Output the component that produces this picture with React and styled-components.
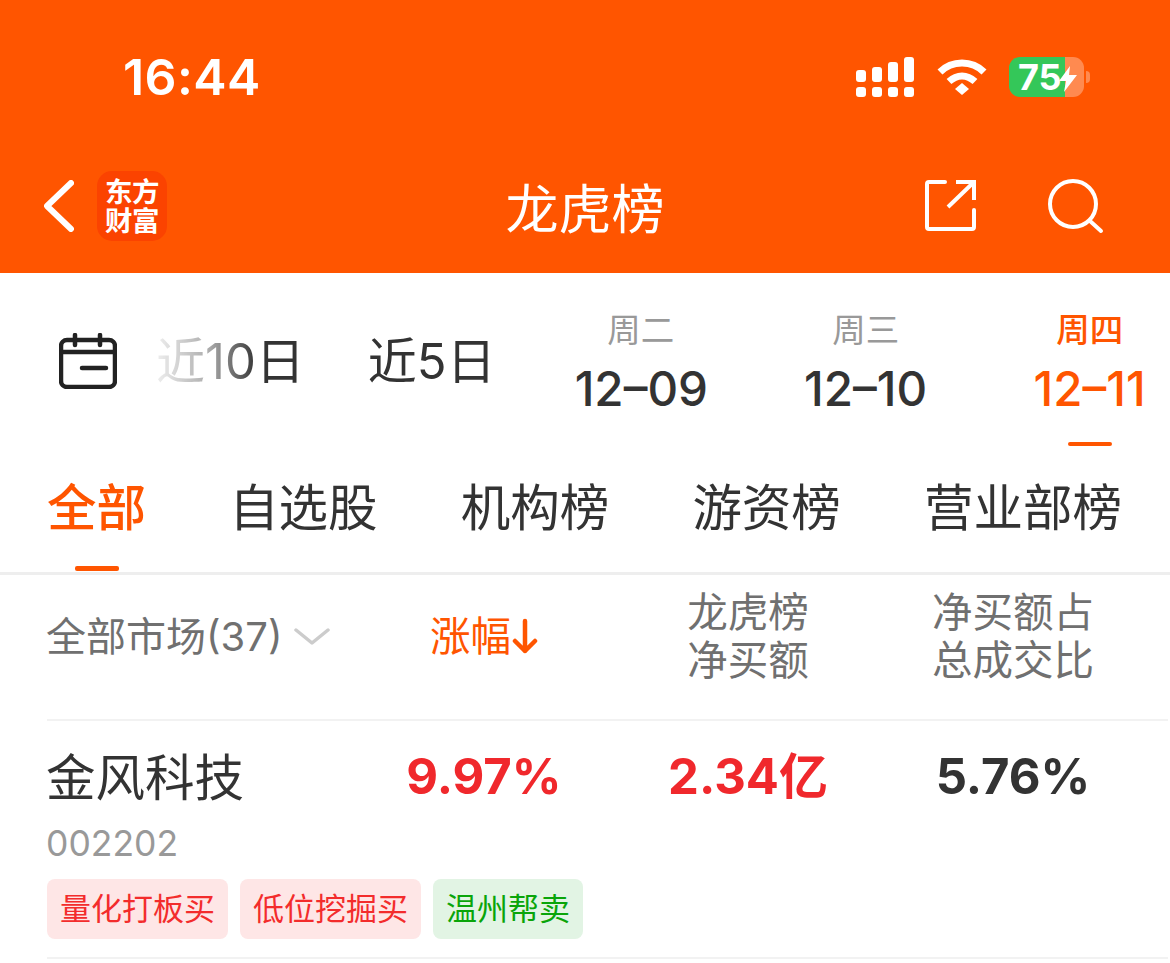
import React from "react";
import styled, { createGlobalStyle } from "styled-components";

const ORANGE = "#ff5500";
const RED = "#f0282c";
const CJK = `Inter, "Noto Sans CJK SC", sans-serif`;

const GlobalStyle = createGlobalStyle`
  html, body {
    margin: 0;
    padding: 0;
    background: #fff;
    font-family: ${CJK};
  }
  * { box-sizing: border-box; }
`;

const Page = styled.div`
  width: 1170px;
  height: 963px;
  overflow: hidden;
  background: #fff;
`;

const Header = styled.header`
  height: 273px;
  background: ${ORANGE};
  color: #fff;
`;

const StatusBar = styled.div`
  height: 154px;
  padding: 0 86px 0 123px;
  display: flex;
  align-items: center;
  justify-content: space-between;
`;

const Time = styled.div`
  font-size: 50px;
  font-weight: 600;
  letter-spacing: 0.4px;
`;

const StatusIcons = styled.div`
  display: flex;
  align-items: center;
  gap: 22.5px;
`;

const Battery = styled.div`
  position: relative;
  width: 75px;
  height: 40px;
  border-radius: 11px;
  padding-left: 9px;
  background: linear-gradient(90deg, #34c759 0 74.5%, #ff8a50 74.5% 100%);
  font-size: 36px;
  font-weight: 700;
  line-height: 40px;
  &::after {
    content: "";
    position: absolute;
    right: -6px;
    top: 14px;
    width: 4px;
    height: 12px;
    border-radius: 0 4px 4px 0;
    background: #ff8a50;
  }
`;

const Bolt = styled.svg`
  position: absolute;
  left: 50px;
  top: 9px;
`;

const Nav = styled.nav`
  height: 119px;
  padding: 0 44px 15px 44px;
  display: grid;
  grid-template-columns: 1fr auto 1fr;
  align-items: center;
`;

const NavLeft = styled.div`
  display: flex;
  align-items: center;
  gap: 23px;
`;

const NavRight = styled.div`
  display: flex;
  align-items: center;
  justify-content: flex-end;
  gap: 69px;
  padding-right: 22px;
`;

const Logo = styled.div`
  width: 70px;
  height: 70px;
  border-radius: 15px;
  background: #fb4300;
  color: #fff;
  font-size: 27.5px;
  font-weight: 700;
  line-height: 29px;
  text-align: center;
  padding-top: 7px;
  letter-spacing: -0.5px;
`;

const NavTitle = styled.h1`
  margin: 0;
  font-size: 53px;
  font-weight: 400;
`;

const DateStrip = styled.div`
  height: 177px;
  padding-left: 59px;
  display: flex;
  align-items: center;
`;

const CalendarIcon = styled.svg`
  flex: none;
  margin-top: -2px;
`;

const Range = styled.div`
  flex: none;
  margin-left: ${(p) => p.$left}px;
  margin-top: -8px;
  font-size: 49px;
  color: #333;
  ${(p) =>
    p.$faded &&
    `-webkit-mask-image: linear-gradient(90deg, rgba(0,0,0,.08) 0, rgba(0,0,0,.4) 35%, #000 68%);
     mask-image: linear-gradient(90deg, rgba(0,0,0,.08) 0, rgba(0,0,0,.4) 35%, #000 68%);`}
`;

const DateCell = styled.div`
  position: relative;
  flex: none;
  width: 132px;
  height: 177px;
  margin-left: ${(p) => p.$left}px;
  padding-top: 36px;
  text-align: center;
  color: ${(p) => (p.$active ? ORANGE : "#333")};
  &::after {
    content: "";
    display: ${(p) => (p.$active ? "block" : "none")};
    position: absolute;
    left: 44px;
    top: 169px;
    width: 44px;
    height: 4px;
    border-radius: 2px;
    background: ${ORANGE};
  }
`;

const Weekday = styled.div`
  font-size: 33.5px;
  line-height: 42px;
  color: ${(p) => (p.$active ? ORANGE : "#999")};
  font-weight: ${(p) => (p.$active ? 500 : 400)};
`;

const DateNum = styled.div`
  font-size: 47.5px;
  font-weight: 500;
  line-height: 60px;
  margin-top: 8px;
  white-space: nowrap;
`;

const Tabs = styled.div`
  height: 125px;
  padding: 0 48px 0 47px;
  display: flex;
  justify-content: space-between;
  border-bottom: 3px solid #eeeeee;
`;

const Tab = styled.div`
  position: relative;
  font-size: 49.5px;
  line-height: 117px;
  color: ${(p) => (p.$active ? ORANGE : "#333")};
  font-weight: ${(p) => (p.$active ? 500 : 400)};
  &::after {
    content: "";
    display: ${(p) => (p.$active ? "block" : "none")};
    position: absolute;
    left: 28px;
    top: 116px;
    width: 44px;
    height: 5px;
    border-radius: 2px;
    background: ${ORANGE};
  }
`;

const Table = styled.div`
  padding-left: 47px;
  padding-right: 2px;
`;

const Row = styled.div`
  display: grid;
  grid-template-columns: 305px 264px 264px 266px;
  border-bottom: 2px solid #f2f2f2;
`;

const HeadRow = styled(Row)`
  height: 146px;
  align-items: center;
  font-size: 40.5px;
  line-height: 48px;
  color: #707070;
  padding-bottom: 20px;
`;

const MarketFilter = styled.div`
  display: flex;
  align-items: center;
  gap: 11px;
  margin-left: -1px;
  font-size: 40px;
  white-space: nowrap;
`;

const HeadCell = styled.div`
  text-align: center;
  color: ${(p) => (p.$active ? ORANGE : "#707070")};
`;

const SortArrow = styled.svg`
  vertical-align: -3px;
  margin-left: 1px;
`;

const DataRow = styled(Row)`
  height: 238px;
`;

const TagList = styled.div`
  grid-column: 1 / -1;
  grid-row: 2;
  display: flex;
  gap: 12px;
  margin-top: -5px;
`;

const StockName = styled.div`
  font-size: 49.5px;
  line-height: 60px;
  color: #333;
  margin: 27px 0 0 -1px;
  white-space: nowrap;
`;

const StockCode = styled.div`
  font-size: 35.5px;
  line-height: 44px;
  color: #999;
  margin: 14px 0 0 -1px;
`;

const Value = styled.div`
  text-align: center;
  font-size: 49px;
  font-weight: 700;
  line-height: 60px;
  margin-top: 26px;
  color: ${(p) => (p.$up ? RED : "#333")};
  white-space: nowrap;
`;

const Tag = styled.div`
  height: 60px;
  padding: 0 13px;
  border-radius: 8px;
  font-size: 31px;
  line-height: 60px;
  background: ${(p) => (p.$sell ? "#e2f4e4" : "#fee6e6")};
  color: ${(p) => (p.$sell ? "#0aa50a" : "#f32c2c")};
`;

function SignalIcon() {
  const bars = [
    [856, 70],
    [872, 67],
    [888, 62],
    [904, 57],
  ];
  return (
    <svg width="58" height="40" viewBox="856 57 58 40" fill="#fff">
      {bars.map(([x, y]) => (
        <g key={x}>
          <rect x={x} y={y} width="10" height={82 - y} rx="3" />
          <rect x={x} y="87" width="10" height="10" rx="3" />
        </g>
      ))}
    </svg>
  );
}

function WifiIcon() {
  return (
    <svg width="50" height="38" viewBox="0 0 50 38" fill="none" stroke="#fff" strokeWidth="7">
      <path d="M3 14 C15 2 35 2 47 14" />
      <path d="M12 23.5 C20 16 30 16 38 23.5" />
      <path d="M18 31 L25 25 L32 31 L25 37 Z" fill="#fff" stroke="none" />
    </svg>
  );
}

const tags = [
  { text: "量化打板买" },
  { text: "低位挖掘买" },
  { text: "温州帮卖", sell: true },
];

export default function App() {
  return (
    <Page>
      <GlobalStyle />
      <Header>
        <StatusBar>
          <Time>16:44</Time>
          <StatusIcons>
            <SignalIcon />
            <WifiIcon />
            <Battery>
              75
              <Bolt width="18" height="26" viewBox="0 0 18 26" fill="#fff">
                <path d="M11 0 L0 15 H7 L5 26 L18 9 H10 Z" />
              </Bolt>
            </Battery>
          </StatusIcons>
        </StatusBar>
        <Nav>
          <NavLeft>
            <svg width="30" height="52" viewBox="0 0 30 52" fill="none" stroke="#fff" strokeWidth="6" strokeLinecap="round" strokeLinejoin="round">
              <path d="M27 3 L3 26 L27 49" />
            </svg>
            <Logo>
              东方
              <br />
              财富
            </Logo>
          </NavLeft>
          <NavTitle>龙虎榜</NavTitle>
          <NavRight>
            <svg width="54" height="54" viewBox="0 0 54 54" fill="none" stroke="#fff" strokeWidth="4">
              <path d="M20 3 H4 Q2 3 2 5 V48 Q2 50 4 50 H47 Q49 50 49 48 V31" strokeLinecap="round" />
              <path d="M31 3 H49 V21 M49 3 L23 28" />
            </svg>
            <svg width="56" height="56" viewBox="0 0 56 56" fill="none" stroke="#fff" strokeWidth="4" strokeLinecap="round">
              <circle cx="25" cy="26" r="23" />
              <path d="M42 43 L53 53" />
            </svg>
          </NavRight>
        </Nav>
      </Header>

      <DateStrip>
        <CalendarIcon width="58" height="56" viewBox="0 0 58 56" fill="none" stroke="#222" strokeWidth="4.5" strokeLinecap="round">
          <rect x="2" y="7" width="54" height="47" rx="6" />
          <path d="M2 19 H56 M16 2 V12 M41 2 V12 M23 35 H47" />
        </CalendarIcon>
        <Range $left={39} $faded>
          近10日
        </Range>
        <Range $left={63}>近5日</Range>
        <DateCell $left={79}>
          <Weekday>周二</Weekday>
          <DateNum>12–09</DateNum>
        </DateCell>
        <DateCell $left={93}>
          <Weekday>周三</Weekday>
          <DateNum>12–10</DateNum>
        </DateCell>
        <DateCell $left={92} $active>
          <Weekday $active>周四</Weekday>
          <DateNum>12–11</DateNum>
        </DateCell>
      </DateStrip>

      <Tabs>
        <Tab $active>全部</Tab>
        <Tab>自选股</Tab>
        <Tab>机构榜</Tab>
        <Tab>游资榜</Tab>
        <Tab>营业部榜</Tab>
      </Tabs>

      <Table>
        <HeadRow>
          <MarketFilter>
            全部市场(37)
            <svg width="36" height="20" viewBox="0 0 36 20" fill="none" stroke="#ccc" strokeWidth="3.5" strokeLinecap="round" strokeLinejoin="round">
              <path d="M2 3 L18 16 L34 3" />
            </svg>
          </MarketFilter>
          <HeadCell $active>
            涨幅
            <SortArrow width="26" height="36" viewBox="0 0 26 36" fill="none" stroke={ORANGE} strokeWidth="4.5" strokeLinecap="round" strokeLinejoin="round">
              <path d="M13 3 V33 M3 23 L13 33 L23 23" />
            </SortArrow>
          </HeadCell>
          <HeadCell>
            龙虎榜
            <br />
            净买额
          </HeadCell>
          <HeadCell>
            净买额占
            <br />
            总成交比
          </HeadCell>
        </HeadRow>
        <DataRow>
          <div>
            <StockName>金风科技</StockName>
            <StockCode>002202</StockCode>
          </div>
          <Value $up>9.97%</Value>
          <Value $up>2.34亿</Value>
          <Value>5.76%</Value>
          <TagList>
            {tags.map((tag) => (
              <Tag key={tag.text} $sell={tag.sell}>
                {tag.text}
              </Tag>
            ))}
          </TagList>
        </DataRow>
      </Table>
    </Page>
  );
}
